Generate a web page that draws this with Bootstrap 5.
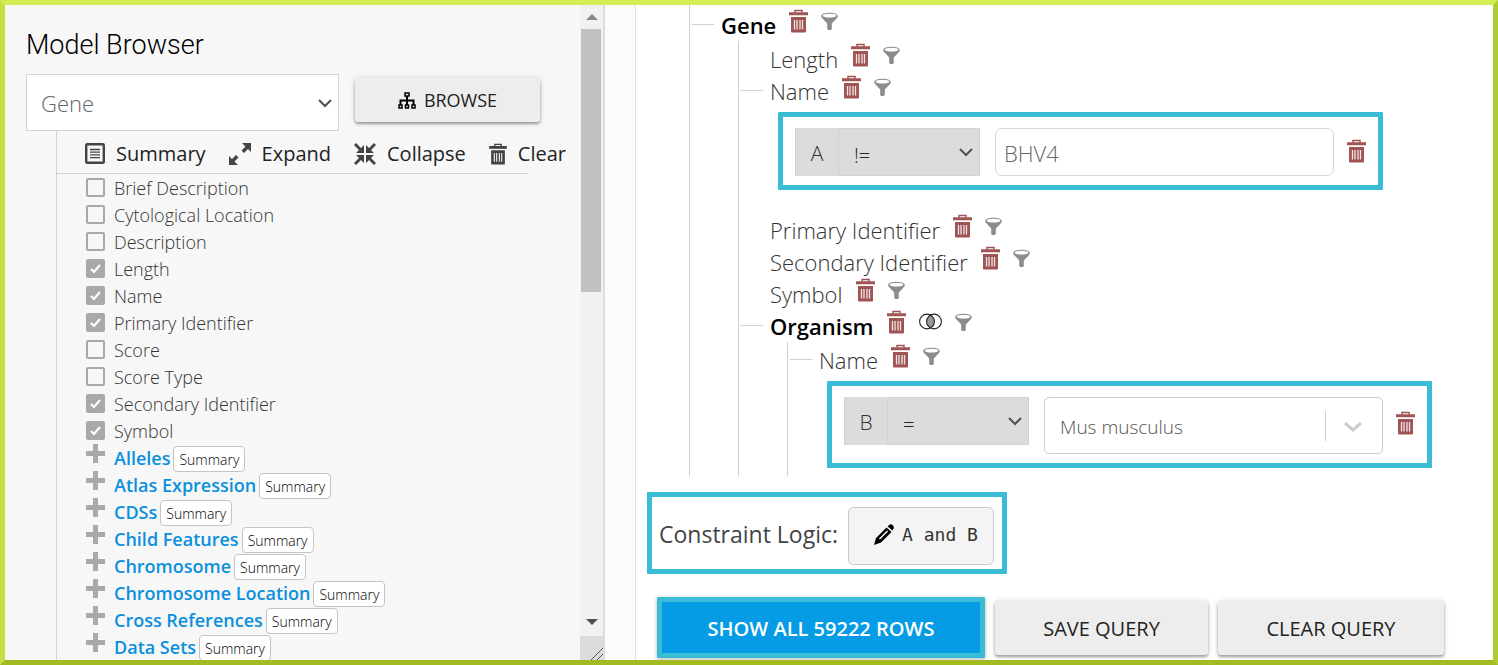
<!DOCTYPE html>
<html lang="en">
<head>
<meta charset="utf-8">
<meta name="viewport" content="width=device-width, initial-scale=1">
<title>Query Builder</title>
<link href="https://cdn.jsdelivr.net/npm/bootstrap@5.3.0/dist/css/bootstrap.min.css" rel="stylesheet">
<style>
  body { font-family: "Open Sans", "Noto Sans", sans-serif; font-weight: 300; color: #333; background: #fff; }
  svg { display: block; flex: none; }
  .frame { height: 100vh; border: 5px solid; border-color: #d3ee55 #aecb30 #a3bb20 #c5e045; }

  /* left pane */
  .browser { flex: 0 0 575px; background: #f7f7f7; }
  .browser-title { font: 300 27px/32px Roboto, sans-serif; color: #000; margin: 24px 0 13px 21px; }
  .class-row { padding-left: 21px; }
  .class-select { width: 313px; height: 57px; border: 1px solid #d3d3d3; border-radius: 0; font-size: 22px; font-weight: 300; color: #666;
    padding: 2px 40px 0 14px; background-position: right 4px center; background-size: 18px; }
  .model-select { height: 48px; width: 142px; border: 1px solid #d3d3d3; border-radius: 0; background-color: #dcdcdc; font-size: 20px; font-weight: 300;
    padding: 8px 36px 0 15px; background-position: right 4px center; background-size: 18px; }
  .chevron { background-image: url("data:image/svg+xml,%3Csvg xmlns='http://www.w3.org/2000/svg' viewBox='0 0 18 18'%3E%3Cpath d='M3 6l6 6 6-6' fill='none' stroke='%23505050' stroke-width='2'/%3E%3C/svg%3E"); }
  .btn-raised { background: #ededed; color: #222; border: 0; border-radius: 3px; box-shadow: 0 2px 3px rgba(0,0,0,.35), 0 0 6px rgba(0,0,0,.12); }
  .btn-raised:hover { background: #e4e4e4; }
  .btn-browse { width: 185px; height: 44px; font-size: 18px; }
  .fields { margin-left: 51px; border-left: 1px solid #d3d3d3; }
  .tools { height: 43px; width: 471px; border-bottom: 1px solid #d3d3d3; padding: 3px 0 0 28px; gap: 23px; }
  .tools a { color: #222; font-size: 20px; font-weight: 500; line-height: 28px; text-decoration: none; white-space: nowrap; gap: 11px; }
  .tools svg { color: #444; }
  .fields li { height: 27px; padding-left: 29px; line-height: 29px; font-size: 18px; white-space: nowrap; }
  .field-check { appearance: none; width: 19px; height: 19px; margin: 4px 9px 0 0; flex: none; border: 2px solid #a9a9a9; border-radius: 2px; align-self: flex-start; }
  .field-check:checked { background: #a9a9a9 url("data:image/svg+xml,%3Csvg xmlns='http://www.w3.org/2000/svg' viewBox='0 0 15 15'%3E%3Cpath d='M3 8l3 3 6-7' fill='none' stroke='white' stroke-width='2.2'/%3E%3C/svg%3E"); }
  .plus { width: 19px; height: 19px; margin: 0 9px 0 0; padding: 0; border: 0; color: #a9a9a9; background: none; }
  .fields li a { color: #0a90dc; font-weight: 600; text-decoration: none; }
  .tag { height: 26px; padding: 0 5px; margin: 2px 0 0 3px; border: 1px solid #c4c4c4; border-radius: 4px; background: #fff; font-size: 14px; font-weight: 300; line-height: 25px; color: #000; }

  .track { flex: 0 0 25px; background: #f1f1f1; border-right: 2px solid #ddd; color: #555; }
  .thumb { height: 263px; margin: 0 2px 0 1px; background: #c1c1c1; }
  .grip { height: 24px; background: #dcdcdc; }
  .gutter { flex: 0 0 31px; background: #fcfcfc; border-right: 1px solid #e0e0e0; }

  /* query tree */
  .tree, .tree ul { list-style: none; padding: 0; margin: 0; border-left: 1px solid #d0d0d0; }
  .tree { margin-left: 53px; padding-top: 4px; height: 471px; }
  .tree ul { margin-left: 48px; padding-top: 2px; }
  .tree ul ul { padding-bottom: 8px; }
  .node { height: 32px; font-size: 22px; line-height: 32px; white-space: nowrap; }
  .node b { font-weight: 600; color: #000; }
  .node::before { content: ""; flex: none; width: 22px; height: 1px; margin: 15px 7px 0 2px; }
  .node.branch::before { background: #d0d0d0; }
  .act { padding: 0; border: 0; background: none; color: #a05454; align-self: flex-start; }
  .node .act { margin-left: 13px; }
  .act.grey { color: #8c8c8c; padding-top: 3px; }
  .hilite { border: 5px solid #3bbcd6; border-radius: 1px; }
  .constraint { width: fit-content; margin-left: 39px; margin-top: 5px; padding: 11px 12px 9px; }
  .remove { margin: 11px 0 0 13px; }
  .beside-list { margin-top: 14px; }
  .code { width: 43px; height: 48px; background: #dcdcdc; font-size: 21px; line-height: 50px; text-align: center; border-left: 1px solid #d3d3d3; }
  .value { width: 339px; height: 48px; margin-left: 15px; border: 1px solid #d6d6d6; border-radius: 7px; padding: 1px 8px 0; font-size: 22px; font-weight: 300; color: #666; }
  .value-list { width: 339px; height: 57px; margin-left: 15px; border: 1px solid #ccc; border-radius: 5px; padding: 3px 60px 0 15px; font-size: 19px; font-weight: 300; color: #555;
    background-image: url("data:image/svg+xml,%3Csvg xmlns='http://www.w3.org/2000/svg' viewBox='0 0 57 32'%3E%3Cpath d='M.5 1v30' stroke='%23ccc'/%3E%3Cpath d='M20 13l8 7 8-7' fill='none' stroke='%23ccc' stroke-width='3'/%3E%3C/svg%3E"); background-size: 57px 32px; background-position: right 0 center; }
  .logic { margin: 16px 0 0 11px; padding: 10px 8px 4px 7px; }
  .logic label { font-size: 23px; font-weight: 400; color: #444; padding-bottom: 4px; }
  .btn-logic { width: 146px; height: 58px; margin-left: 10px; padding: 0 0 4px 25px; background: #f4f4f4; border: 1px solid #ccc; border-radius: 5px; color: #333; font: 400 18px "DejaVu Sans Mono", monospace; }
  .actions { margin: 23px 0 0 21px; gap: 10px; }
  .btn-query { height: 54px; font-size: 20px; font-weight: 500; padding: 2px 0 0; white-space: nowrap; }
  .btn-show { width: 328px; height: 61px; background: #059be5; color: #fff; font-weight: 600; font-size: 20px; padding: 3px 0 0; box-shadow: 0 1px 4px rgba(0,0,0,.3); }
  .btn-show:hover { background: #0590d5; color: #fff; border-color: #3bbcd6; }
  .btn-save { width: 213px; }
  .btn-clear { width: 226px; }
</style>
</head>
<body>
<svg width="0" height="0" class="position-absolute" aria-hidden="true">
  <symbol id="trash" viewBox="0 0 19 24"><path d="M6 3.500V1.500h7v2M0 5h19" fill="none" stroke="currentColor" stroke-width="1.500"/><path d="M0 3.200h19v3H0zM2 8h15v14.500q0 1-1 1H3q-1 0-1-1z" fill="currentColor"/><path d="M5.500 11v9.500M8 11v9.500M11 11v9.500M13.500 11v9.500" stroke="#fff" stroke-width="1.300" opacity=".85"/></symbol>
  <symbol id="filter" viewBox="0 0 17 18"><path d="M.2 4C.2-.5 16.800-.5 16.800 4c0 2-2 3-6 7.500V17l-1 1H7.200l-1-1v-5.500C2.500 7 .2 6 .2 4z" fill="currentColor"/><ellipse cx="8.500" cy="3.700" rx="6.800" ry="1.900" fill="#fff"/></symbol>
  <symbol id="venn" viewBox="0 0 23 17"><path d="M11.500 1.700a8 8 0 0 1 0 13.600 8 8 0 0 1 0-13.600z" fill="#999"/><circle cx="8" cy="8.500" r="7.400" fill="none" stroke="#222" stroke-width="1.100"/><circle cx="15" cy="8.500" r="7.400" fill="none" stroke="#222" stroke-width="1.100"/></symbol>
  <symbol id="plus" viewBox="0 0 19 19"><path d="M7 0h5v7h7v5h-7v7H7v-7H0V7h7z" fill="currentColor"/></symbol>
  <symbol id="list" viewBox="0 0 20 21"><rect x="1.200" y="1.200" width="17.600" height="18.600" rx="1" fill="none" stroke="currentColor" stroke-width="2.400"/><path d="M5 6.500h10M5 9.200h10M5 11.900h10M5 14.600h10" stroke="currentColor" stroke-width="1.300"/></symbol>
  <symbol id="expand" viewBox="0 0 22 22"><path d="M13 0h9v9l-3-3-4 4-2.500-2.500 4-4zM0 22v-9l3 3 4-4 2.500 2.500-4 4L9 22z" fill="currentColor"/></symbol>
  <symbol id="collapse" viewBox="0 0 22 22"><path d="M10 10H2l3-3-5-5 2-2 5 5 3-3zM12 10V2l3 3 5-5 2 2-5 5 3 3zM10 12v8l-3-3-5 5-2-2 5-5-3-3zM12 12h8l-3 3 5 5-2 2-5-5-3 3z" fill="currentColor"/></symbol>
  <symbol id="tree-icon" viewBox="0 0 18 17"><path d="M7 1h4v3H7zM1 13h3v3H1zM7.500 13h3v3h-3zM14 13h3v3h-3z" fill="none" stroke="#000" stroke-width="1.500"/><path d="M9 4v9M2.500 13V8.500h13V13" fill="none" stroke="#000" stroke-width="2"/></symbol>
  <symbol id="pencil" viewBox="0 0 20 21"><path d="M0 21l2-7L12.500 3.500l5 4.500L7 18.500zM13.700 2.500L15 1q2-1.500 3.800.2Q20.500 3 19.500 4.800L18.400 6.500z" fill="#000"/><path d="M5.500 15l8-8" stroke="#fff" stroke-width="1.500"/></symbol>
</svg>

<div class="frame d-flex overflow-hidden">
  <aside class="browser overflow-hidden">
    <h1 class="browser-title">Model Browser</h1>
    <div class="class-row d-flex gap-3">
      <select class="form-select class-select chevron" aria-label="Class"><option>Gene</option></select>
      <button type="button" class="btn btn-raised btn-browse d-flex align-items-center justify-content-center gap-2 mt-1"><svg width="18" height="17"><use href="#tree-icon"/></svg>BROWSE</button>
    </div>
    <div class="fields">
      <div class="tools d-flex align-items-center">
        <a href="#" class="d-flex align-items-center"><svg width="20" height="21"><use href="#list"/></svg>Summary</a>
        <a href="#" class="d-flex align-items-center"><svg width="22" height="22"><use href="#expand"/></svg>Expand</a>
        <a href="#" class="d-flex align-items-center"><svg width="22" height="22"><use href="#collapse"/></svg>Collapse</a>
        <a href="#" class="d-flex align-items-center"><svg width="18" height="22"><use href="#trash"/></svg>Clear</a>
      </div>
      <ul class="list-unstyled mb-0">
        <li class="d-flex"><input class="field-check" type="checkbox" id="f1"><label for="f1">Brief Description</label></li>
        <li class="d-flex"><input class="field-check" type="checkbox" id="f2"><label for="f2">Cytological Location</label></li>
        <li class="d-flex"><input class="field-check" type="checkbox" id="f3"><label for="f3">Description</label></li>
        <li class="d-flex"><input class="field-check" type="checkbox" id="f4" checked><label for="f4">Length</label></li>
        <li class="d-flex"><input class="field-check" type="checkbox" id="f5" checked><label for="f5">Name</label></li>
        <li class="d-flex"><input class="field-check" type="checkbox" id="f6" checked><label for="f6">Primary Identifier</label></li>
        <li class="d-flex"><input class="field-check" type="checkbox" id="f7"><label for="f7">Score</label></li>
        <li class="d-flex"><input class="field-check" type="checkbox" id="f8"><label for="f8">Score Type</label></li>
        <li class="d-flex"><input class="field-check" type="checkbox" id="f9" checked><label for="f9">Secondary Identifier</label></li>
        <li class="d-flex"><input class="field-check" type="checkbox" id="f10" checked><label for="f10">Symbol</label></li>
        <li class="d-flex"><button type="button" class="plus" aria-label="Open"><svg width="19" height="19"><use href="#plus"/></svg></button><a href="#">Alleles</a><button type="button" class="tag">Summary</button></li>
        <li class="d-flex"><button type="button" class="plus" aria-label="Open"><svg width="19" height="19"><use href="#plus"/></svg></button><a href="#">Atlas Expression</a><button type="button" class="tag">Summary</button></li>
        <li class="d-flex"><button type="button" class="plus" aria-label="Open"><svg width="19" height="19"><use href="#plus"/></svg></button><a href="#">CDSs</a><button type="button" class="tag">Summary</button></li>
        <li class="d-flex"><button type="button" class="plus" aria-label="Open"><svg width="19" height="19"><use href="#plus"/></svg></button><a href="#">Child Features</a><button type="button" class="tag">Summary</button></li>
        <li class="d-flex"><button type="button" class="plus" aria-label="Open"><svg width="19" height="19"><use href="#plus"/></svg></button><a href="#">Chromosome</a><button type="button" class="tag">Summary</button></li>
        <li class="d-flex"><button type="button" class="plus" aria-label="Open"><svg width="19" height="19"><use href="#plus"/></svg></button><a href="#">Chromosome Location</a><button type="button" class="tag">Summary</button></li>
        <li class="d-flex"><button type="button" class="plus" aria-label="Open"><svg width="19" height="19"><use href="#plus"/></svg></button><a href="#">Cross References</a><button type="button" class="tag">Summary</button></li>
        <li class="d-flex"><button type="button" class="plus" aria-label="Open"><svg width="19" height="19"><use href="#plus"/></svg></button><a href="#">Data Sets</a><button type="button" class="tag">Summary</button></li>
      </ul>
    </div>
  </aside>
  <div class="track d-flex flex-column" aria-hidden="true">
    <svg width="23" height="24"><path d="M6 15l6-6 6 6z" fill="#888"/></svg>
    <div class="thumb"></div>
    <svg class="mt-auto" width="23" height="28"><path d="M6 11h12l-6 6z" fill="#505050"/></svg>
    <div class="grip"><svg width="23" height="24"><path d="M11 24l12-12M17 24l6-6" stroke="#555"/></svg></div>
  </div>
  <div class="gutter"></div>

  <main class="flex-grow-1 overflow-hidden">
    <ul class="tree">
      <li>
        <div class="node branch d-flex"><b>Gene</b><button type="button" class="act" aria-label="Remove"><svg width="19" height="24"><use href="#trash"/></svg></button><button type="button" class="act grey" aria-label="Filter"><svg width="17" height="18"><use href="#filter"/></svg></button></div>
        <ul>
          <li><div class="node d-flex"><span>Length</span><button type="button" class="act" aria-label="Remove"><svg width="19" height="24"><use href="#trash"/></svg></button><button type="button" class="act grey" aria-label="Filter"><svg width="17" height="18"><use href="#filter"/></svg></button></div></li>
          <li>
            <div class="node branch d-flex"><span>Name</span><button type="button" class="act" aria-label="Remove"><svg width="19" height="24"><use href="#trash"/></svg></button><button type="button" class="act grey" aria-label="Filter"><svg width="17" height="18"><use href="#filter"/></svg></button></div>
            <div class="constraint hilite d-flex align-items-start mb-4">
              <div class="code">A</div>
              <select class="form-select model-select chevron" aria-label="Operator A"><option>!=</option></select>
              <input class="value" type="text" value="BHV4" aria-label="Value A">
              <button type="button" class="act remove" aria-label="Remove constraint A"><svg width="19" height="24"><use href="#trash"/></svg></button>
            </div>
          </li>
          <li><div class="node d-flex"><span>Primary Identifier</span><button type="button" class="act" aria-label="Remove"><svg width="19" height="24"><use href="#trash"/></svg></button><button type="button" class="act grey" aria-label="Filter"><svg width="17" height="18"><use href="#filter"/></svg></button></div></li>
          <li><div class="node d-flex"><span>Secondary Identifier</span><button type="button" class="act" aria-label="Remove"><svg width="19" height="24"><use href="#trash"/></svg></button><button type="button" class="act grey" aria-label="Filter"><svg width="17" height="18"><use href="#filter"/></svg></button></div></li>
          <li><div class="node d-flex"><span>Symbol</span><button type="button" class="act" aria-label="Remove"><svg width="19" height="24"><use href="#trash"/></svg></button><button type="button" class="act grey" aria-label="Filter"><svg width="17" height="18"><use href="#filter"/></svg></button></div></li>
          <li>
            <div class="node branch d-flex"><b>Organism</b><button type="button" class="act" aria-label="Remove"><svg width="19" height="24"><use href="#trash"/></svg></button><button type="button" class="act grey" aria-label="Outer join"><svg width="23" height="17"><use href="#venn"/></svg></button><button type="button" class="act grey" aria-label="Filter"><svg width="17" height="18"><use href="#filter"/></svg></button></div>
            <ul>
              <li>
                <div class="node branch d-flex"><span>Name</span><button type="button" class="act" aria-label="Remove"><svg width="19" height="24"><use href="#trash"/></svg></button><button type="button" class="act grey" aria-label="Filter"><svg width="17" height="18"><use href="#filter"/></svg></button></div>
                <div class="constraint hilite d-flex align-items-start">
                  <div class="code">B</div>
                  <select class="form-select model-select chevron" aria-label="Operator B"><option>=</option></select>
                  <select class="form-select value-list" aria-label="Value B"><option>Mus musculus</option></select>
                  <button type="button" class="act remove beside-list" aria-label="Remove constraint B"><svg width="19" height="24"><use href="#trash"/></svg></button>
                </div>
              </li>
            </ul>
          </li>
        </ul>
      </li>
    </ul>
    <div class="logic hilite d-inline-flex align-items-center">
      <label for="logic">Constraint Logic:</label>
      <button type="button" id="logic" class="btn-logic d-flex align-items-center gap-2"><svg width="20" height="21"><use href="#pencil"/></svg>A and B</button>
    </div>
    <div class="actions d-flex align-items-center">
      <button type="button" class="btn btn-show hilite">SHOW ALL 59222 ROWS</button>
      <button type="button" class="btn btn-raised btn-query btn-save">SAVE QUERY</button>
      <button type="button" class="btn btn-raised btn-query btn-clear">CLEAR QUERY</button>
    </div>
  </main>
</div>
<script src="https://cdn.jsdelivr.net/npm/bootstrap@5.3.0/dist/js/bootstrap.bundle.min.js"></script>
</body>
</html>
